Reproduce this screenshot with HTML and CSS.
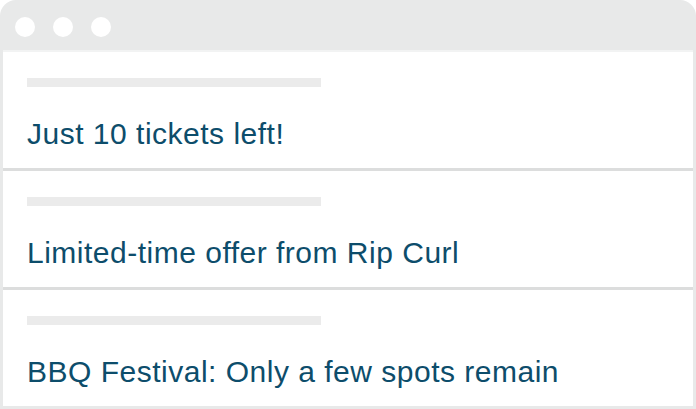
FILE: index.html
```html
<!DOCTYPE html>
<html lang="en">
<head>
  <meta charset="UTF-8" />
  <meta name="viewport" content="width=device-width, initial-scale=1.0"/>
  <title>Notifications</title>
  <link rel="stylesheet" href="styles.css">
</head>
<body>
  <div class="window">
    <div class="titlebar">
      <span class="dot"></span>
      <span class="dot"></span>
      <span class="dot"></span>
    </div>
    <div class="list">
      <div class="item">
        <div class="placeholder"></div>
        <p class="message">Just 10 tickets left!</p>
      </div>
      <div class="item">
        <div class="placeholder"></div>
        <p class="message">Limited-time offer from Rip Curl</p>
      </div>
      <div class="item">
        <div class="placeholder"></div>
        <p class="message">BBQ Festival: Only a few spots remain</p>
      </div>
    </div>
  </div>
</body>
</html>
```

FILE: styles.css
```css
:root {
  --frame: #e8e9e9;
  --divider: #dcdddd;
  --bar: #ebebeb;
  --text: #0d4d6b;
}

body {
  margin: 0;
  background: #ffffff;
  font-family: 'Liberation Sans', Arial, sans-serif;
}

.window {
  width: 696px;
  height: 409px;
  box-sizing: border-box;
  background: var(--frame);
  border-radius: 16px 16px 0 0;
  padding: 0 3px 3px;
  display: flex;
  flex-direction: column;
}

.titlebar {
  height: 52px;
  flex-shrink: 0;
  box-sizing: border-box;
  padding: 17px 0 0 12px;
  display: flex;
  gap: 18px;
  border-bottom: 2px solid #f2f3f3;
}

.dot {
  width: 20px;
  height: 20px;
  border-radius: 50%;
  background: #ffffff;
}

.list {
  flex: 1;
  display: flex;
  flex-direction: column;
  gap: 3px;
  background: var(--divider);
}

.item {
  flex: 1;
  background: #ffffff;
  padding: 26px 0 0 24px;
}

.placeholder {
  width: 294px;
  height: 9px;
  background: var(--bar);
}

.message {
  margin: 31px 0 0;
  font-size: 30px;
  line-height: 32px;
  letter-spacing: 0.5px;
  color: var(--text);
}
```
